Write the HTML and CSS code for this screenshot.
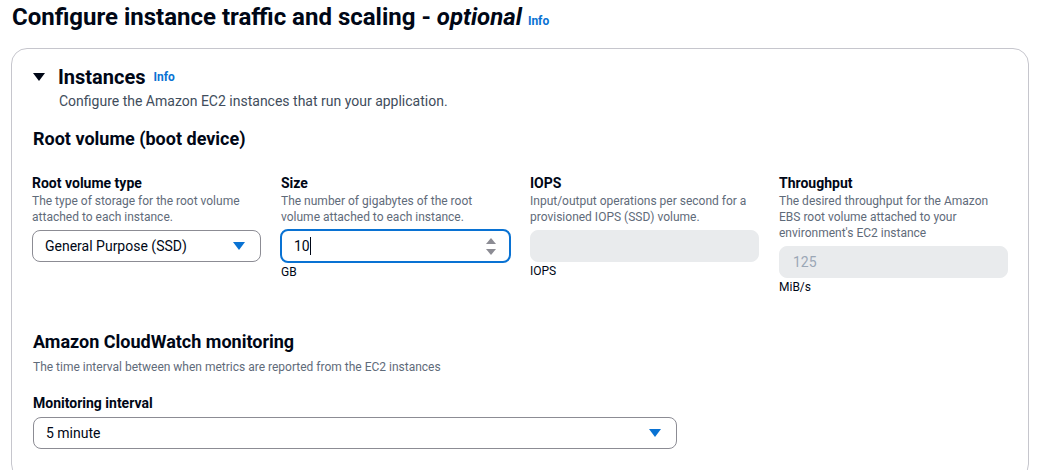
FILE: index.html
```html
<!DOCTYPE html>
<html lang="en">
<head>
<meta charset="utf-8">
<title>Configure instance traffic and scaling</title>
<link rel="stylesheet" href="styles.css">
</head>
<body>
<div class="page">
  <h1 class="title">Configure instance traffic and scaling - <i>optional</i> <a class="info info-title" href="#">Info</a></h1>
  <section class="card">
    <div class="card-head">
      <svg class="expand" width="12" height="10" viewBox="0 0 12 10"><path d="M0 1h12L6 9z" fill="#000716"/></svg>
      <h2 class="card-title">Instances</h2>
      <a class="info" href="#">Info</a>
    </div>
    <p class="card-desc">Configure the Amazon EC2 instances that run your application.</p>

    <h3 class="sub">Root volume (boot device)</h3>
    <div class="fields">
      <div class="field">
        <div class="label">Root volume type</div>
        <div class="desc">The type of storage for the root volume attached to each instance.</div>
        <div class="select">
          <span>General Purpose (SSD)</span>
          <svg class="caret" width="12" height="8" viewBox="0 0 12 8"><path d="M0 0h12L6 8z" fill="#0972d3"/></svg>
        </div>
      </div>
      <div class="field">
        <div class="label">Size</div>
        <div class="desc">The number of gigabytes of the root volume attached to each instance.</div>
        <div class="input focused">
          <span>10<span class="cursor"></span></span>
          <svg class="spin" width="10" height="17" viewBox="0 0 10 17"><path d="M5 0l5 6H0z" fill="#8c8c94"/><path d="M0 11h10l-5 6z" fill="#8c8c94"/></svg>
        </div>
        <div class="unit">GB</div>
      </div>
      <div class="field">
        <div class="label">IOPS</div>
        <div class="desc">Input/output operations per second for a provisioned IOPS (SSD) volume.</div>
        <div class="input disabled"></div>
        <div class="unit">IOPS</div>
      </div>
      <div class="field">
        <div class="label">Throughput</div>
        <div class="desc">The desired throughput for the Amazon EBS root volume attached to your environment's EC2 instance</div>
        <div class="input disabled"><span>125</span></div>
        <div class="unit">MiB/s</div>
      </div>
    </div>

    <h3 class="sub sub-cw">Amazon CloudWatch monitoring</h3>
    <p class="cw-desc">The time interval between when metrics are reported from the EC2 instances</p>
    <div class="label label-mon">Monitoring interval</div>
    <div class="select select-wide">
      <span>5 minute</span>
      <svg class="caret" width="12" height="8" viewBox="0 0 12 8"><path d="M0 0h12L6 8z" fill="#0972d3"/></svg>
    </div>
  </section>
</div>
</body>
</html>
```

FILE: styles.css
```css
* { box-sizing: border-box; }
html, body { margin: 0; padding: 0; background: #ffffff; }
body {
  font-family: Roboto, "Open Sans", sans-serif;
  color: #000716;
  width: 1040px;
  height: 470px;
  overflow: hidden;
}
.page { padding: 2px 11px 0 11px; }
.title {
  margin: 0 0 12px 1px;
  font-size: 24px;
  line-height: 30px;
  font-weight: 700;
}
.title i { font-weight: 700; }
.info {
  color: #0972d3;
  font-size: 12px;
  font-weight: 700;
  text-decoration: none;
  letter-spacing: 0;
}
.info-title { margin-left: 0; }
.card {
  border: 1px solid #c6c6cd;
  border-radius: 16px;
  padding: 15px 19px 30px 20px;
  background: #fff;
}
.card-head {
  display: flex;
  align-items: center;
  height: 26px;
}
.expand { margin-left: 1px; margin-right: 13px; }
.card-title {
  margin: 0 8px 0 0;
  font-size: 20px;
  line-height: 26px;
  font-weight: 700;
}
.card-desc {
  margin: 1px 0 0 27px;
  font-size: 14px;
  line-height: 20px;
  color: #414d5c;
}
.sub {
  margin: 17px 0 0 1px;
  font-size: 18px;
  line-height: 22px;
  font-weight: 700;
}
.fields {
  display: grid;
  grid-template-columns: repeat(4, 229px);
  column-gap: 20px;
  margin-top: 24px;
  align-items: start;
}
.label {
  font-size: 14px;
  line-height: 18px;
  font-weight: 700;
}
.desc {
  font-size: 12px;
  line-height: 16px;
  color: #5f6b7a;
  margin-top: 1px;
}
.select, .input {
  height: 32px;
  margin-top: 5px;
  border: 1px solid #8c8c94;
  border-radius: 8px;
  display: flex;
  align-items: center;
  justify-content: space-between;
  padding: 0 15px 0 12px;
  font-size: 14px;
}
.input.focused {
  border: 2px solid #0972d3;
  padding: 0 13px 0 12px;
  width: 231px;
  margin-left: -1px;
  margin-top: 4px;
  height: 34px;
}
.cursor {
  display: inline-block;
  width: 1px;
  height: 18px;
  background: #000716;
  vertical-align: -4px;
}
.input.disabled {
  background: #e9ebed;
  border-color: #e9ebed;
  color: #9ba7b6;
  padding-left: 13px;
}
.unit {
  font-size: 12px;
  line-height: 16px;
  margin-top: 1px;
}
.sub-cw { margin-top: 36px; }
.cw-desc {
  margin: 6px 0 0 1px;
  font-size: 12px;
  line-height: 16px;
  color: #5f6b7a;
}
.label-mon { margin-top: 19px; margin-left: 1px; }
.select-wide { width: 644px; margin-left: 1px; }
```
